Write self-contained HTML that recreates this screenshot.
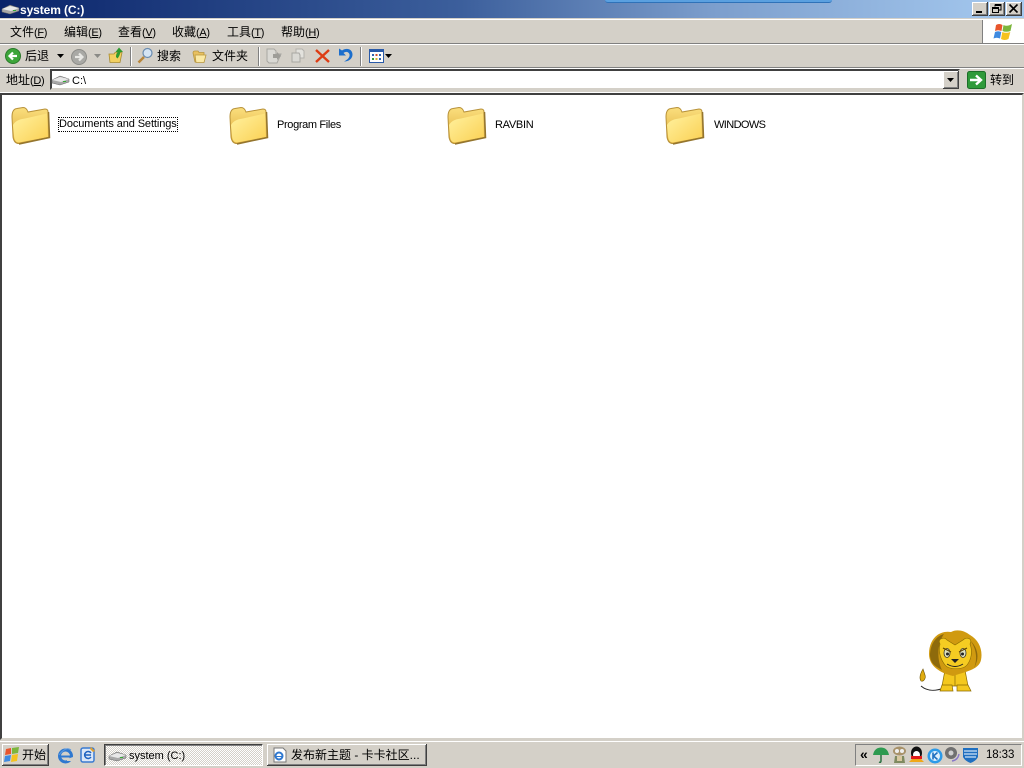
<!DOCTYPE html>
<html><head><meta charset="utf-8"><style>
html,body{margin:0;padding:0;width:1024px;height:768px;overflow:hidden;background:#d4d0c8}
body{position:relative;font:12px/14px "Liberation Sans","WenQuanYi Zen Hei","Noto Sans CJK SC",sans-serif;color:#000}
.a{position:absolute;white-space:nowrap}
svg{position:absolute;overflow:visible}
.b{position:absolute;width:16px;height:14px;top:2px;background:#d4d0c8;box-shadow:inset -1px -1px #404040,inset 1px 1px #fff,inset -2px -2px #808080}
.sep{position:absolute;width:1px;background:#808080;border-right:1px solid #fff}
i{font-style:normal;font-size:11px;letter-spacing:-.35px}
u{text-decoration:underline}
.l{font-size:11px;line-height:14px;top:118px}
</style></head><body>
<svg width="0" height="0" style="position:absolute"><defs>
<linearGradient id="fg" x1="0" y1="0" x2="1" y2="1"><stop offset="0" stop-color="#fff2a0"/><stop offset="1" stop-color="#fbd053"/></linearGradient>
<linearGradient id="fb" x1="0" y1="0" x2="0" y2="1"><stop offset="0" stop-color="#fbdf7e"/><stop offset="1" stop-color="#dca935"/></linearGradient>
<g id="folder"><path d="M1 11Q1 3 6 2.500L12 1.500Q15.500 1.500 17 6L34 3Q37 3 37 6L38 31L8 37.500Q3 37.500 2 31Z" fill="url(#fb)" stroke="#b8923a" stroke-width="1"/><path d="M2 19Q5 13.500 14 12.500L36 7.500L37 31L8 36.500Q3.500 36.500 3 30Z" fill="url(#fg)"/><path d="M37.500 6L38.500 31.500L8 38" fill="none" stroke="#94752e" stroke-width="1.500"/></g>
<g id="drive"><path d="M0 5 L8 1 L17 4 L17 7 L8 10 L0 8Z" fill="#a8a8a8" stroke="#666" stroke-width=".5"/><path d="M0 5 L8 2 L17 4 L9 7Z" fill="#e8e8e8"/><rect x="11" y="6" width="3" height="1" fill="#3a3"/></g>
</defs></svg>

<!-- title bar -->
<div class="a" style="left:0;top:0;width:1024px;height:18px;background:linear-gradient(90deg,#0a246a 0%,#3c5f9c 45%,#7d9fcd 70%,#a6caf0 100%)"></div>
<div class="a" style="left:605px;top:0;width:227px;height:2px;background:#5aa0e0;border-radius:0 0 5px 5px;border-bottom:1px solid #2f72b8"></div>
<svg style="left:2px;top:4px" width="17" height="11"><use href="#drive"/></svg>
<div class="a" style="left:20px;top:3px;color:#fff;font-weight:bold;font-size:12px;letter-spacing:-.1px">system (C:)</div>
<div class="b" style="left:972px"><svg style="left:4px;top:9px" width="7" height="2"><rect width="6" height="2"/></svg></div>
<div class="b" style="left:989px"><svg style="left:3px;top:2px" width="10" height="10"><path d="M3 .5H9V6H7M3 .5V2.500M3 1.500H9" fill="none" stroke="#000"/><path d="M.5 3.500H6.500V8.500H.5Z M.5 4.500H6.500" fill="none" stroke="#000"/></svg></div>
<div class="b" style="left:1006px"><svg style="left:3px;top:2px" width="10" height="10"><path d="M.5 .5L8.500 8.500M8.500 .5L.5 8.500" stroke="#000" stroke-width="1.600"/></svg></div>

<!-- bands -->
<div class="a" style="left:0;top:18px;width:1024px;height:1px;background:#d4d0c8"></div>
<div class="a" style="left:0;top:19px;width:1024px;height:1px;background:#fff"></div>
<div class="a" style="left:0;top:43px;width:1024px;height:1px;background:#808080"></div>
<div class="a" style="left:0;top:44px;width:1024px;height:1px;background:#fff"></div>
<div class="a" style="left:0;top:67px;width:1024px;height:1px;background:#808080"></div>
<div class="a" style="left:0;top:68px;width:1024px;height:1px;background:#fff"></div>
<div class="a" style="left:0;top:92px;width:1024px;height:1px;background:#fff"></div>

<!-- menu -->
<div class="a" style="left:10px;top:25px">文件<i>(<u>F</u>)</i></div>
<div class="a" style="left:64px;top:25px">编辑<i>(<u>E</u>)</i></div>
<div class="a" style="left:118px;top:25px">查看<i>(<u>V</u>)</i></div>
<div class="a" style="left:172px;top:25px">收藏<i>(<u>A</u>)</i></div>
<div class="a" style="left:227px;top:25px">工具<i>(<u>T</u>)</i></div>
<div class="a" style="left:281px;top:25px">帮助<i>(<u>H</u>)</i></div>
<div class="a" style="left:982px;top:20px;width:1px;height:23px;background:#808080"></div>
<div class="a" style="left:983px;top:20px;width:41px;height:23px;background:#fff"></div>
<svg style="left:993px;top:22px" width="20" height="20">
<path d="M3 3 Q6 1 9.500 3 L8.500 9 Q5 7.500 2 9Z" fill="#e8552c"/>
<path d="M10.500 3 Q14 5 19 2 L17.500 9 Q13 10.500 9.500 9Z" fill="#7cb63c"/>
<path d="M2 10 Q5 8.500 8.300 10 L7 16.500 Q3.500 15 .5 16.500Z" fill="#3f8ae0"/>
<path d="M9.300 10 Q13 11.500 17.300 10 L15.500 17 Q11.500 19 8 17Z" fill="#f5c21e"/></svg>

<!-- toolbar -->
<svg style="left:5px;top:48px" width="16" height="16"><circle cx="8" cy="8" r="7.500" fill="#3da53a" stroke="#2b7a2b"/><path d="M12 8H5M8 4.500L4.500 8L8 11.500" fill="none" stroke="#fff" stroke-width="2.200"/></svg>
<div class="a" style="left:25px;top:49px">后退</div>
<svg style="left:57px;top:54px" width="7" height="4"><path d="M0 0H7L3.500 4Z" fill="#000"/></svg>
<svg style="left:71px;top:49px" width="16" height="16"><circle cx="8" cy="8" r="7.500" fill="#a9a9a5" stroke="#8c8c88"/><path d="M4 8H11M8 4.500L11.500 8L8 11.500" fill="none" stroke="#e8e8e4" stroke-width="2.200"/></svg>
<svg style="left:94px;top:54px" width="7" height="4"><path d="M0 0H7L3.500 4Z" fill="#8a8a86"/></svg>
<svg style="left:108px;top:47px" width="16" height="17"><path d="M1 7H6L7 5.500H14L12 15.500H2Z" fill="#f2d061" stroke="#a88b30" stroke-width=".8"/><path d="M8 10C8 7 9 5.500 10 5H7.500L11 .5L15 5H12.500C12 7 11.500 9 9.500 11.500Z" fill="#2f9a2f"/></svg>
<div class="sep" style="left:130px;top:47px;height:19px"></div>
<svg style="left:137px;top:47px" width="16" height="18"><circle cx="10.500" cy="6" r="4.500" fill="#d4e4f4" stroke="#6a8cb0" stroke-width="1.200"/><path d="M7 10L1.500 15.500" stroke="#b8863a" stroke-width="2.500"/></svg>
<div class="a" style="left:157px;top:49px">搜索</div>
<svg style="left:192px;top:49px" width="16" height="15"><path d="M1 4Q1 2 3 2H6L7 3.500H12V13H3Z" fill="#e8c060" stroke="#b8963e" stroke-width=".8"/><path d="M3 6H14L12 13.500H4Z" fill="#fbe9a4" stroke="#b8963e" stroke-width=".8"/></svg>
<div class="a" style="left:212px;top:49px">文件夹</div>
<div class="sep" style="left:258px;top:47px;height:19px"></div>
<svg style="left:266px;top:48px" width="16" height="16" opacity=".75"><path d="M1 1H8L10 3V6H15L11 15H3L1 13Z" fill="#dcdcd8" stroke="#9a9a96"/><path d="M7 6H11V4L15 8L11 12V10H7Z" fill="#8c8c88"/></svg>
<svg style="left:290px;top:48px" width="16" height="16" opacity=".75"><path d="M6 1H12L14 3V10H6Z" fill="#e8e8e4" stroke="#a8a8a4"/><path d="M2 5H9L10 7V14H2Z" fill="#dcdcd8" stroke="#9a9a96"/></svg>
<svg style="left:315px;top:49px" width="15" height="14"><path d="M1 1L14 13M14 1L1 13" stroke="#dd3c14" stroke-width="2.400"/></svg>
<svg style="left:337px;top:47px" width="16" height="16"><path d="M2 1.500V8.500H9L6.500 6C9 4 12 5 12.500 7.500C13 10 11 12.500 7 14.500C12 14.500 15.500 11.500 15.500 7.500C15.500 2.500 10 0 5 3.500Z" fill="#1c6ecc"/></svg>
<div class="sep" style="left:360px;top:47px;height:19px"></div>
<svg style="left:369px;top:49px" width="15" height="14"><rect x=".5" y=".5" width="14" height="13" fill="#fff" stroke="#2a5aa8"/><rect x=".5" y=".5" width="14" height="2.500" fill="#2a5aa8"/><path d="M3 5h2v2H3z" fill="#3465b0"/><path d="M6.500 5h2v2h-2z" fill="#d05030"/><path d="M10 5h2v2h-2z" fill="#3465b0"/><path d="M3 9h2v2H3z" fill="#3a9a3a"/><path d="M6.500 9h2v2h-2z" fill="#e0b030"/><path d="M10 9h2v2h-2z" fill="#3465b0"/></svg>
<svg style="left:385px;top:54px" width="7" height="4"><path d="M0 0H7L3.500 4Z" fill="#000"/></svg>

<!-- address -->
<div class="a" style="left:6px;top:73px">地址<i>(<u>D</u>)</i></div>
<div class="a" style="left:50px;top:69px;width:910px;height:21px;background:#fff;box-sizing:border-box;border:2px solid;border-color:#404040 #d4d0c8 #d4d0c8 #404040"></div>
<svg style="left:52px;top:75px" width="17" height="11"><use href="#drive"/></svg>
<div class="a" style="left:72px;top:74px;font-size:11px">C:\</div>
<div class="a" style="left:943px;top:71px;width:16px;height:18px;background:#d4d0c8;box-shadow:inset -1px -1px #404040,inset 1px 1px #fff,inset -2px -2px #808080"><svg style="left:4px;top:7px" width="8" height="4"><path d="M0 0H7L3.500 4Z" fill="#000"/></svg></div>
<svg style="left:967px;top:71px" width="19" height="18"><rect x=".5" y=".5" width="18" height="17" rx="2" fill="#2f9a3a" stroke="#1c6e28"/><path d="M3 9H13M9 4.500L14 9L9 13.500" fill="none" stroke="#fff" stroke-width="2.400"/></svg>
<div class="a" style="left:990px;top:73px">转到</div>

<!-- content -->
<div class="a" style="left:0;top:93px;width:1024px;height:647px;background:#fff;box-sizing:border-box;border:2px solid;border-color:#404040 #d4d0c8 #d4d0c8 #404040"></div>

<svg style="left:11px;top:106px" width="40" height="40"><use href="#folder"/></svg>
<div class="a" style="left:59px;top:118px;height:13px;outline:1px dotted #000;font-size:11px;line-height:13px;letter-spacing:-.1px">Documents and Settings</div>
<svg style="left:229px;top:106px" width="40" height="40"><use href="#folder"/></svg>
<div class="a l" style="left:277px;letter-spacing:-.35px">Program Files</div>
<svg style="left:447px;top:106px" width="40" height="40"><use href="#folder"/></svg>
<div class="a l" style="left:495px;letter-spacing:-.3px">RAVBIN</div>
<svg style="left:665px;top:106px" width="40" height="40"><use href="#folder"/></svg>
<div class="a l" style="left:714px;letter-spacing:-.6px">WINDOWS</div>

<!-- lion -->
<svg style="left:918px;top:628px" width="66" height="66">
<path d="M3 58C10 64 18 63 26 60" fill="none" stroke="#222" stroke-width="1"/>
<path d="M5 41C2 46 1 50 3 53C6 54 8 50 7 47Z" fill="#e0ac10" stroke="#6a5000" stroke-width=".6"/>
<path d="M27 42L24 58H37V42ZM37 42V58H50L47 42Z" fill="#f4c81e" stroke="#8a6a00" stroke-width=".7"/>
<path d="M22 63H35L34 57H24ZM39 63H53L50 57H39Z" fill="#f4c81e" stroke="#8a6a00" stroke-width=".7"/>
<path d="M35 48C22 45 11 38 11 26C11 10 22 2 33 4C38 1 46 2 52 7C61 12 65 22 63 32C61 42 46 44 35 48Z" fill="#d09a10"/>
<path d="M12 28C12 16 18 8 26 6C20 14 18 30 24 42C17 38 13 36 12 28ZM52 12C60 20 62 30 56 40C60 30 58 20 52 12Z" fill="#8e6a0c"/>
<path d="M22 16C19 11 26 8 29 12L37 17L45 12C49 8 55 11 52 16C55 24 53 32 49 37C45 42 31 42 27 37C23 32 20 24 22 16Z" fill="#f5cc22" stroke="#8a6a00" stroke-width=".6"/>
<ellipse cx="29" cy="25" rx="3" ry="4.500" fill="#dfe3c0" stroke="#333" stroke-width=".8"/><ellipse cx="45" cy="25" rx="3" ry="4.500" fill="#dfe3c0" stroke="#333" stroke-width=".8"/>
<circle cx="29.500" cy="26" r="1.500" fill="#222"/><circle cx="44.500" cy="26" r="1.500" fill="#222"/>
<path d="M25 20L33 24M49 20L41 24" stroke="#5c4300" stroke-width="1.200"/>
<path d="M33 31H41L37 35Z" fill="#222"/><path d="M29 36Q37 41 45 36" fill="none" stroke="#222"/>
</svg>

<!-- taskbar -->
<div class="a" style="left:0;top:740px;width:1024px;height:1px;background:#d4d0c8"></div>
<div class="a" style="left:0;top:741px;width:1024px;height:1px;background:#fff"></div>
<div class="a" style="left:2px;top:744px;width:47px;height:22px;background:#d4d0c8;box-shadow:inset -1px -1px #404040,inset 1px 1px #fff,inset -2px -2px #808080"></div>
<svg style="left:4px;top:747px" width="16" height="16"><path d="M2 2L7 1L7 7L1 8Z" fill="#e8552c"/><path d="M8 1L15 0L14 6L8 7Z" fill="#7cb63c"/><path d="M1 9L7 8L6 14L0 15Z" fill="#3f8ae0"/><path d="M8 8L14 7L13 14L7 15Z" fill="#f5c21e"/></svg>
<div class="a" style="left:22px;top:748px;font-size:12px">开始</div>
<svg style="left:57px;top:747px" width="17" height="17"><circle cx="8.500" cy="9" r="6" fill="none" stroke="#2f78d0" stroke-width="3"/><path d="M3 9.500H14" stroke="#2f78d0" stroke-width="2"/><path d="M14 3Q9 -1 2 8" fill="none" stroke="#5a9ae0"/><path d="M10 12L16 10V14H10Z" fill="#d4d0c8"/></svg>
<svg style="left:80px;top:747px" width="16" height="16"><rect x="1" y="1" width="13" height="14" rx="2" fill="#dbe7f7" stroke="#3a7ad0" stroke-width="1.500"/><path d="M11 6A3.500 3.500 0 1 0 11 10M5 8H11" fill="none" stroke="#1e62c0" stroke-width="1.500"/><path d="M11 0L15 4L13 5L10 2Z" fill="#e0a030"/></svg>
<div class="a" style="left:104px;top:744px;width:159px;height:22px;box-sizing:border-box;border:1px solid;border-color:#404040 #fff #fff #404040;box-shadow:inset 1px 1px #808080;background-color:#eeece8;background-image:repeating-conic-gradient(#d4d0c8 0 25%,#fff 0 50%);background-size:2px 2px"></div>
<svg style="left:109px;top:751px" width="17" height="11"><use href="#drive"/></svg>
<div class="a" style="left:129px;top:749px;font-size:11px">system (C:)</div>
<div class="a" style="left:267px;top:744px;width:160px;height:22px;background:#d4d0c8;box-shadow:inset -1px -1px #404040,inset 1px 1px #fff,inset -2px -2px #808080"></div>
<svg style="left:272px;top:747px" width="16" height="16"><path d="M2 1H11L14 4V15H2Z" fill="#fff" stroke="#777"/><circle cx="7" cy="9" r="3.500" fill="none" stroke="#2f78d0" stroke-width="2"/><path d="M4 9.500H10" stroke="#2f78d0"/></svg>
<div class="a" style="left:291px;top:748px;font-size:12px">发布新主题 - 卡卡社区...</div>
<div class="a" style="left:855px;top:744px;width:167px;height:22px;box-sizing:border-box;border:1px solid;border-color:#808080 #fff #fff #808080"></div>
<div class="a" style="left:860px;top:747px;font-weight:bold;font-size:14px">«</div>
<svg style="left:872px;top:747px" width="18" height="17"><path d="M1 8C2 2 6 .5 9 .5C12 .5 16 2 17 8Z" fill="#2e9a50"/><path d="M9 8V14Q9 16 7 15" fill="none" stroke="#1e6a38" stroke-width="1.400"/></svg>
<svg style="left:891px;top:746px" width="17" height="18"><ellipse cx="8.500" cy="5" rx="6.500" ry="4.500" fill="#a8926a"/><circle cx="6" cy="5" r="2" fill="#eee"/><circle cx="11" cy="5" r="2" fill="#eee"/><path d="M4 10H13L14 17H3Z" fill="#7f8a60"/><path d="M6 10H11V15H6Z" fill="#d8c8a0"/></svg>
<svg style="left:908px;top:746px" width="17" height="18"><ellipse cx="8.500" cy="7" rx="5.500" ry="6.500" fill="#111"/><ellipse cx="8.500" cy="9" rx="3.500" ry="4" fill="#fff"/><path d="M3 10H14V13H3Z" fill="#e01a1a"/><path d="M1 16L4 13H13L16 16Z" fill="#f0a818"/></svg>
<svg style="left:927px;top:748px" width="16" height="16"><circle cx="8" cy="8" r="7.500" fill="#2c9ae8"/><circle cx="8" cy="8" r="5" fill="#dff0fc"/><path d="M6 4.500V11.500M10.500 4.500L6.500 8L10.500 11.500" fill="none" stroke="#1e70c0" stroke-width="1.600"/></svg>
<svg style="left:944px;top:746px" width="17" height="17"><circle cx="7" cy="7" r="6" fill="#707070"/><circle cx="7" cy="7" r="2.500" fill="#d0d0d0"/><path d="M8 15Q14 14 15 8" fill="none" stroke="#8878c8" stroke-width="1.400"/></svg>
<svg style="left:962px;top:746px" width="17" height="18"><path d="M1 2H16V11Q14 15 8.500 17Q3 15 1 11Z" fill="#1f6fc0"/><path d="M2 5H15M2 8H15M3 11H14" stroke="#cfe4f7" stroke-width="1.200"/></svg>
<div class="a" style="left:986px;top:748px;font-size:11.500px;letter-spacing:-.1px">18:33</div>
</body></html>
